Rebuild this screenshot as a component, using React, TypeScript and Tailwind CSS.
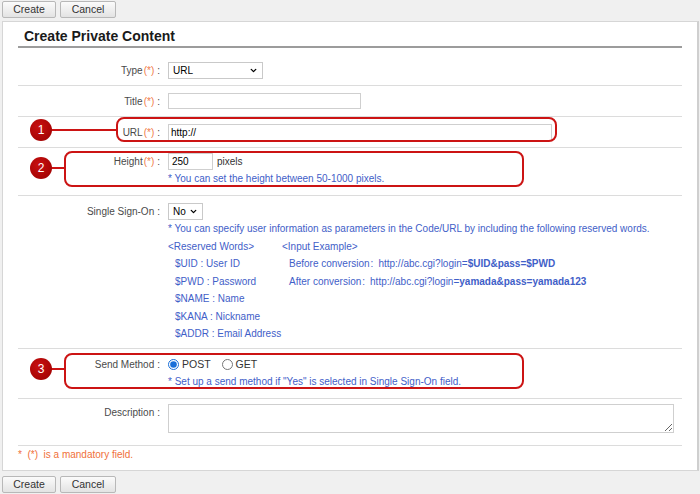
import { ChevronDown } from "lucide-react";
import type { ReactNode } from "react";

const LABEL = "text-right text-[#4a4a4a] leading-[17px] whitespace-nowrap";
const HINT = "text-[#3f60c8] leading-[17px] whitespace-nowrap";

const Label = ({ text, required }: { text: string; required?: boolean }) => (
  <div className={LABEL}>
    {text}
    {required && <span className="ml-[1px] text-[#f07a4a]">(*)</span>}
    <span className="ml-[3px]">:</span>
  </div>
);

const Row = ({ label, className, children }: { label: ReactNode; className: string; children: ReactNode }) => (
  <div className={`grid grid-cols-[142px_1fr] gap-x-[8px] border-b border-[#dcdcdc] ${className}`}>
    {label}
    <div>{children}</div>
  </div>
);

const FakeSelect = ({ value, width }: { value: string; width: string }) => (
  <div className={`flex items-center justify-between h-[17px] border border-[#c9c9c9] bg-white pl-[4px] pr-[4px] text-black ${width}`}>
    <span>{value}</span>
    <ChevronDown size={9} strokeWidth={3.5} className="text-black" />
  </div>
);

const Button = ({ text, width }: { text: string; width: string }) => (
  <button
    className={`h-[17px] ${width} border border-[#b8b8b8] rounded-[2px] bg-gradient-to-b from-[#fbfbfb] to-[#e3e3e3] text-[#333] text-[10.5px] leading-[15px]`}
  >
    {text}
  </button>
);

const Callout = ({ n, box, line, circle }: { n: number; box: string; line: string; circle: string }) => (
  <>
    <div className={`absolute border-2 border-[#cc1414] rounded-[8px] ${box}`} />
    <div className={`absolute h-[2px] bg-[#cc1414] ${line}`} />
    <div
      className={`absolute w-[22px] h-[22px] rounded-full bg-[radial-gradient(circle_at_40%_35%,#c81010,#9a0000)] text-white text-[12px] leading-[22px] text-center ${circle}`}
    >
      {n}
    </div>
  </>
);

export default function App() {
  return (
    <div className="relative w-[700px] h-[494px] bg-[#f0f0f0] text-[10px] font-['Liberation_Sans',Arial,sans-serif] overflow-hidden">
      {/* Top buttons */}
      <div className="flex gap-[4px] pl-[2px] pt-[1px] h-[21px]">
        <Button text="Create" width="w-[54px]" />
        <Button text="Cancel" width="w-[56px]" />
      </div>

      {/* Panel */}
      <div className="ml-[2px] w-[697px] h-[450px] bg-white border border-[#d6d6d6] border-r-2 border-r-[#cfcfcf] px-[15px]">
        <h1 className="pl-[6px] pt-[6px] pb-[2px] leading-[16px] text-[14px] font-bold text-[#1a1a1a] border-b-2 border-[#9c9c9c]">
          Create Private Content
        </h1>

        <Row label={<div className="pt-[14px]"><Label text="Type" required /></div>} className="pb-[6px]">
          <div className="pt-[14px]">
            <FakeSelect value="URL" width="w-[95px]" />
          </div>
        </Row>

        <Row label={<div className="pt-[7px]"><Label text="Title" required /></div>} className="pb-[6px]">
          <div className="pt-[7px]">
            <input className="block w-[193px] h-[16px] border border-[#cfcfcf] outline-none" />
          </div>
        </Row>

        <Row label={<div className="pt-[7px]"><Label text="URL" required /></div>} className="pb-[6px]">
          <div className="pt-[7px]">
            <input
              defaultValue="http://"
              className="block w-[384px] h-[17px] border border-[#cfcfcf] px-[2px] text-black outline-none"
            />
          </div>
        </Row>

        <Row label={<div className="pt-[5px]"><Label text="Height" required /></div>} className="pb-[8px]">
          <div className="pt-[5px]">
            <div className="flex items-center h-[17px]">
              <input
                defaultValue="250"
                className="block w-[45px] h-[17px] border border-[#cfcfcf] px-[3px] text-black outline-none"
              />
              <span className="ml-[4px] text-[#333]">pixels</span>
            </div>
            <div className={HINT}>* You can set the height between 50-1000 pixels.</div>
          </div>
        </Row>

        <Row label={<div className="pt-[7px]"><Label text="Single Sign-On" /></div>} className="h-[153px]">
          <div className="pt-[7px]">
            <FakeSelect value="No" width="w-[35px] h-[16px]" />
            <div className="text-[#3f60c8] leading-[17.5px] whitespace-nowrap">
              <div>* You can specify user information as parameters in the Code/URL by including the following reserved words.</div>
              <div className="grid grid-cols-[114px_1fr]">
                <div>&lt;Reserved Words&gt;</div>
                <div>&lt;Input Example&gt;</div>
                <div className="pl-[7px]">$UID : User ID</div>
                <div className="pl-[7px]">
                  Before conversion<span className="ml-[1px] mr-[5px]">:</span>http://abc.cgi?login=
                  <b>$UID&amp;pass=$PWD</b>
                </div>
                <div className="pl-[7px]">$PWD : Password</div>
                <div className="pl-[7px]">
                  After conversion<span className="ml-[1px] mr-[5px]">:</span>http://abc.cgi?login=
                  <b>yamada&amp;pass=yamada123</b>
                </div>
                <div className="pl-[7px] col-span-2">$NAME : Name</div>
                <div className="pl-[7px] col-span-2">$KANA : Nickname</div>
                <div className="pl-[7px] col-span-2">$ADDR : Email Address</div>
              </div>
            </div>
          </div>
        </Row>

        <Row label={<div className="pt-[7px]"><Label text="Send Method" /></div>} className="pb-[8px]">
          <div className="pt-[7px]">
            <div className="flex items-center h-[17px] text-[#333] text-[10.5px]">
              <input type="radio" name="method" defaultChecked className="m-0 w-[11px] h-[11px] accent-[#1a6fd8]" />
              <span className="ml-[3px]">POST</span>
              <input type="radio" name="method" className="m-0 ml-[11px] w-[11px] h-[11px]" />
              <span className="ml-[3px]">GET</span>
            </div>
            <div className={HINT}>* Set up a send method if "Yes" is selected in Single Sign-On field.</div>
          </div>
        </Row>

        <Row label={<div className="pt-[5px]"><Label text="Description" /></div>} className="pb-[12px]">
          <div className="pt-[5px]">
            <textarea className="block w-[506px] h-[29px] border border-[#cfcfcf] outline-none" />
          </div>
        </Row>

        <div className="leading-[17px] text-[#f0703a] whitespace-pre">*  (*)  is a mandatory field.</div>
      </div>

      {/* Bottom buttons */}
      <div className="flex gap-[4px] pl-[2px] pt-[5px]">
        <Button text="Create" width="w-[54px]" />
        <Button text="Cancel" width="w-[56px]" />
      </div>

      {/* Annotations */}
      <Callout n={1} box="left-[116px] top-[117px] w-[441px] h-[25px]" line="left-[50px] top-[129px] w-[67px]" circle="left-[30px] top-[119px]" />
      <Callout n={2} box="left-[64px] top-[151px] w-[460px] h-[36px]" line="left-[50px] top-[167px] w-[15px]" circle="left-[30px] top-[157px]" />
      <Callout n={3} box="left-[64px] top-[353px] w-[460px] h-[36px]" line="left-[50px] top-[368px] w-[15px]" circle="left-[30px] top-[358px]" />
    </div>
  );
}
